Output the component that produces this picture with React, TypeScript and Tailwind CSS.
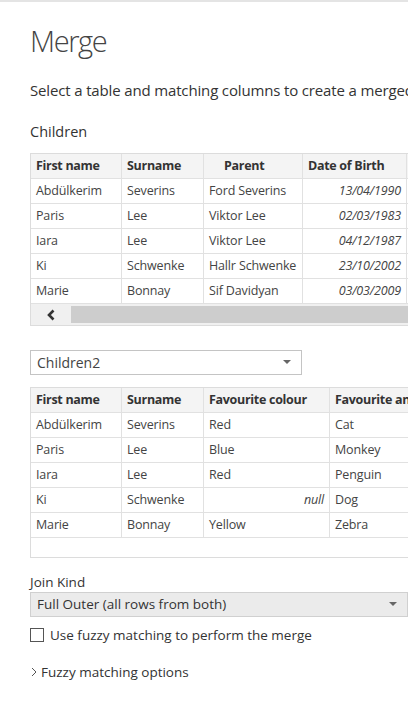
const font = { fontFamily: '"Open Sans", "Noto Sans", sans-serif' };

type Col = { title: string; width: string; headAlign?: string };

const childCols: Col[] = [
  { title: 'First name', width: 'w-[91px]' },
  { title: 'Surname', width: 'w-[82px]' },
  { title: 'Parent', width: 'w-[99px]', headAlign: 'pl-[20px]' },
  { title: 'Date of Birth', width: 'w-[104px]' },
  { title: '', width: 'w-[100px]' },
];

const childRows = [
  ['Abdülkerim', 'Severins', 'Ford Severins', '13/04/1990'],
  ['Paris', 'Lee', 'Viktor Lee', '02/03/1983'],
  ['Iara', 'Lee', 'Viktor Lee', '04/12/1987'],
  ['Ki', 'Schwenke', 'Hallr Schwenke', '23/10/2002'],
  ['Marie', 'Bonnay', 'Sif Davidyan', '03/03/2009'],
];

const child2Cols: Col[] = [
  { title: 'First name', width: 'w-[91px]' },
  { title: 'Surname', width: 'w-[82px]' },
  { title: 'Favourite colour', width: 'w-[126px]' },
  { title: 'Favourite animal', width: 'w-[120px]' },
];

const child2Rows: (string | null)[][] = [
  ['Abdülkerim', 'Severins', 'Red', 'Cat'],
  ['Paris', 'Lee', 'Blue', 'Monkey'],
  ['Iara', 'Lee', 'Red', 'Penguin'],
  ['Ki', 'Schwenke', null, 'Dog'],
  ['Marie', 'Bonnay', 'Yellow', 'Zebra'],
];

function HeaderRow({ cols }: { cols: Col[] }) {
  return (
    <div className="flex h-[25px] bg-[#f4f4f4] border-b border-[#e1e1e1]">
      {cols.map((c, i) => (
        <div
          key={i}
          className={`${c.width} shrink-0 flex items-center px-[5px] border-r border-[#e1e1e1] font-bold text-[12.5px] tracking-[-0.3px] text-[#333] whitespace-nowrap overflow-hidden ${c.headAlign ?? ''}`}
        >
          {c.title}
        </div>
      ))}
    </div>
  );
}

function Caret() {
  return (
    <svg width="8" height="5" viewBox="0 0 8 5">
      <path d="M0 0 H8 L4 4 Z" fill="#666" />
    </svg>
  );
}

export default function App() {
  return (
    <div
      className="w-[408px] h-[720px] overflow-hidden bg-white border-t-2 border-[#e4e4e4] text-[#444]"
      style={font}
    >
      <div className="pl-[30px]">
        <h1 className="pt-[19px] text-[29px] font-light leading-[40px] text-[#444] tracking-[-1.4px]">
          Merge
        </h1>

        <p className="mt-[19px] text-[15px] leading-[20px] tracking-[-0.15px] whitespace-nowrap text-[#333]">
          Select a table and matching columns to create a merged table.
        </p>

        <p className="mt-[22px] text-[14.5px] leading-[20px] text-[#333]">Children</p>

        {/* first table */}
        <div className="mt-[11px] w-[500px] border border-[#dcdcdc]">
          <HeaderRow cols={childCols} />
          {childRows.map((r, ri) => (
            <div key={ri} className="flex h-[25px] border-b border-[#e1e1e1]">
              {r.map((v, i) => (
                <div
                  key={i}
                  className={`${childCols[i].width} shrink-0 flex items-center px-[5px] border-r border-[#e1e1e1] text-[12.5px] tracking-[-0.15px] whitespace-nowrap ${
                    i === 3 ? 'justify-end italic' : ''
                  }`}
                >
                  {v}
                </div>
              ))}
              <div className="w-[100px] shrink-0" />
            </div>
          ))}
          <div className="flex h-[21px] bg-[#f0f0f0]">
            <div className="w-[40px] flex items-center justify-center">
              <svg width="10" height="12" viewBox="0 0 10 12">
                <path d="M7.5 1.5 L3 6 L7.5 10.5" stroke="#333" strokeWidth="2.6" fill="none" />
              </svg>
            </div>
            <div className="flex-1 my-[2px] bg-[#cdcdcd]" />
          </div>
        </div>

        {/* table picker */}
        <div className="mt-[24px] w-[272px] h-[25px] border border-[#c4c4c4] flex items-center justify-between pl-[6px] pr-[10px]">
          <span className="text-[14px] text-[#444]">Children2</span>
          <Caret />
        </div>

        {/* second table */}
        <div className="mt-[12px] w-[500px] border border-[#dcdcdc]">
          <HeaderRow cols={child2Cols} />
          {child2Rows.map((r, ri) => (
            <div key={ri} className="flex h-[25px] border-b border-[#e1e1e1]">
              {r.map((v, i) => (
                <div
                  key={i}
                  className={`${child2Cols[i].width} shrink-0 flex items-center px-[5px] border-r border-[#e1e1e1] text-[12.5px] tracking-[-0.15px] whitespace-nowrap ${
                    v === null ? 'justify-end italic' : ''
                  }`}
                >
                  {v === null ? 'null' : v}
                </div>
              ))}
            </div>
          ))}
          <div className="h-[19px]" />
        </div>

        {/* join kind */}
        <p className="mt-[14px] text-[13.5px] leading-[20px] text-[#333]">Join Kind</p>
        <div className="h-[25px] bg-[#ebebeb] border border-[#d0d0d0] flex items-center justify-between pl-[6px] pr-[10px]">
          <span className="text-[13.5px] text-[#333]">Full Outer (all rows from both)</span>
          <Caret />
        </div>

        <label className="mt-[9px] flex items-center gap-[6px]">
          <span className="w-[14px] h-[14px] border border-[#555] bg-white" />
          <span className="text-[13.5px] text-[#333] leading-[18px]">
            Use fuzzy matching to perform the merge
          </span>
        </label>

        <div className="mt-[18px] flex items-center gap-[3px] text-[13.5px] leading-[20px] text-[#333]">
          <svg width="8" height="10" viewBox="0 0 8 10">
            <path d="M2 1 L6 5 L2 9" stroke="#555" strokeWidth="1" fill="none" />
          </svg>
          <span>Fuzzy matching options</span>
        </div>
      </div>
    </div>
  );
}
